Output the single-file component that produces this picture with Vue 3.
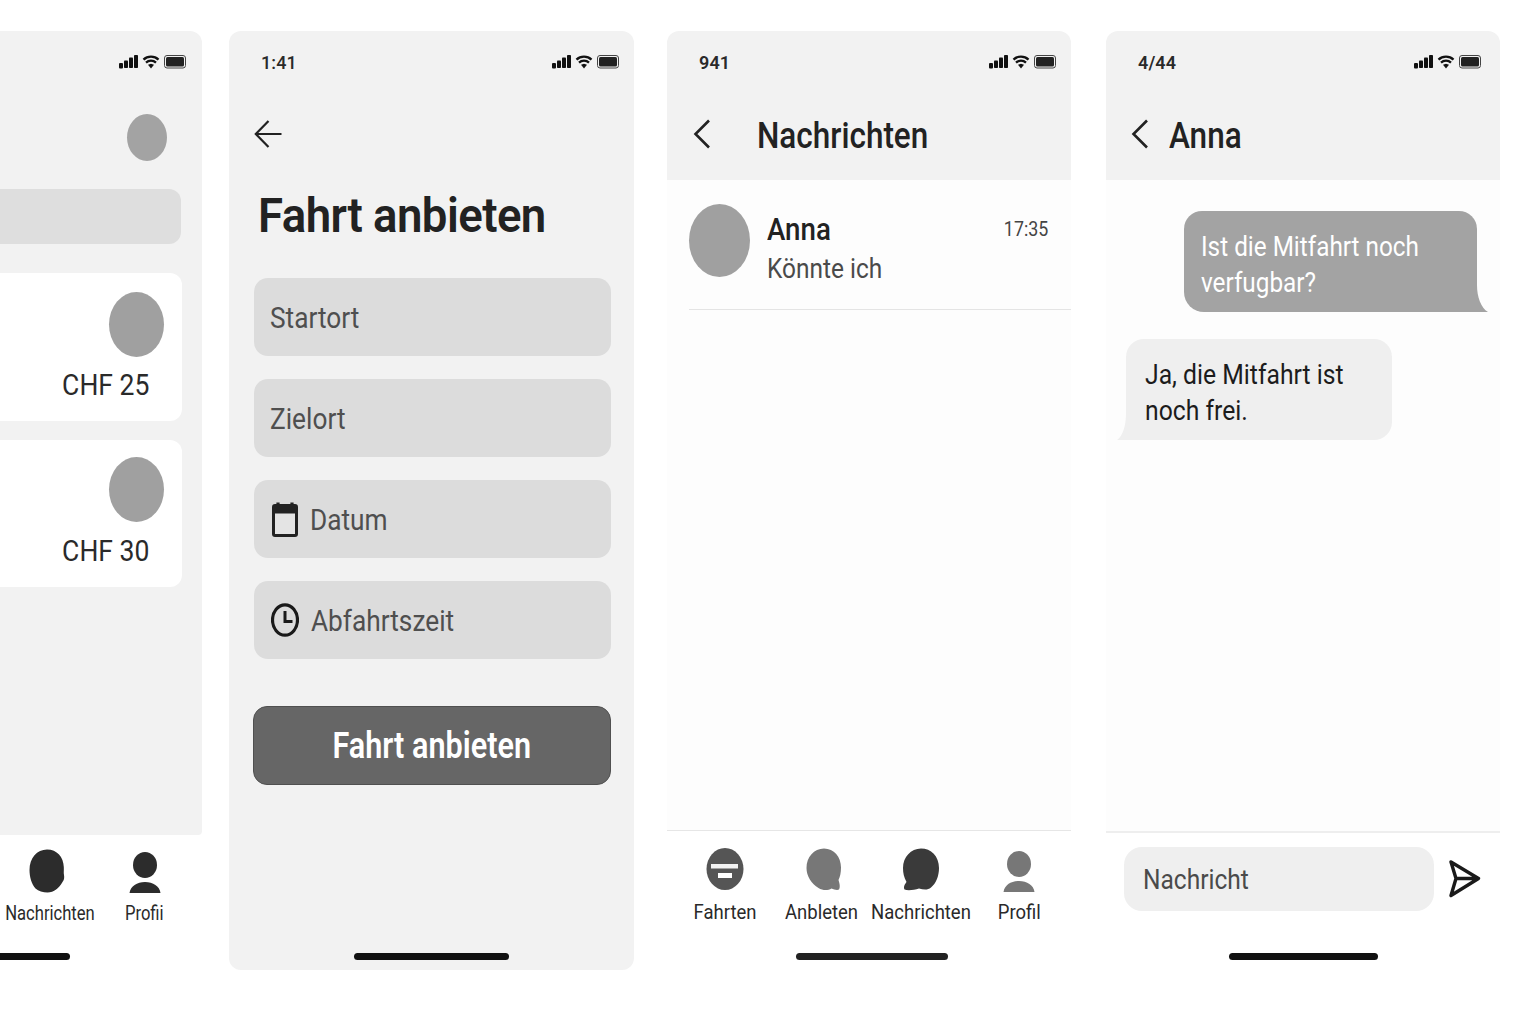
<template>
  <div class="page">
    <svg class="defs" aria-hidden="true">
      <symbol id="status" viewBox="0 0 67 14">
        <rect x="0" y="8" width="4" height="5.500" rx="1" fill="#111" />
        <rect x="5" y="5.500" width="4" height="7.500" rx="0.800" fill="#111" />
        <rect x="10" y="2.500" width="4" height="10.500" rx="0.800" fill="#111" />
        <rect x="15" y="0" width="4" height="13" rx="0.800" fill="#111" />
        <path d="M24.500 4.600C28.600 0.600 35.400 0.600 39.500 4.600" fill="none" stroke="#111" stroke-width="2.300" />
        <path d="M27 7.600C29.800 5 34.200 5 37 7.600" fill="none" stroke="#111" stroke-width="2.300" />
        <path d="M29 9.800L32 8.800L35 9.800L32 13.500Z" fill="#111" />
        <rect x="45.500" y="0.500" width="21" height="12.500" rx="2.500" fill="#f2f2f2" stroke="#444" />
        <rect x="47" y="2" width="18" height="9.500" rx="1.500" fill="#222" />
      </symbol>
      <symbol id="blob-plain" viewBox="0 0 38 44">
        <path d="M18 0.500C28 0.500 34.500 8 34.800 18C35 21 34.500 24 35 26C35.500 29 35 31 33.500 33C30 39 25 43.500 18.500 43.500C14 43.500 9.500 42 6.500 39.500C2.500 35 0.500 28 0.500 21C0.500 9 8 0.500 18 0.500Z" />
      </symbol>
      <symbol id="blob-right" viewBox="0 0 38 44">
        <path d="M20 0.500C30 0.500 37 9 37 19.500C37 25 36 29 34.500 32C35.500 35 36.500 39 35 41.500C33 42.500 30 41.500 27.500 40.500C24 42.500 19 42.800 14.500 40C7.500 36 2.500 28 2.500 20C2.500 9 10 0.500 20 0.500Z" />
      </symbol>
      <symbol id="blob-left" viewBox="0 0 38 44">
        <path d="M19 0.500C29 0.500 37 8 37 20C37 28 34 35.500 29 39.500C25.500 42.500 21 41.500 17 40.500C12 42 6 43 2.500 41.500C1 39 3 36 4.500 34C2 29.500 1 25 1 20C1 9 9 0.500 19 0.500Z" />
      </symbol>
      <symbol id="person" viewBox="0 0 34 44">
        <ellipse cx="17" cy="16" rx="12" ry="13" />
        <path d="M1.500 44C2.500 37 9 33 17 33C25 33 31.500 37 32.500 44Z" />
      </symbol>
      <symbol id="chevron" viewBox="0 0 18 30">
        <path d="M16 1.500L2.500 15L16 28.500" fill="none" stroke="#222" stroke-width="2.600" />
      </symbol>
    </svg>

    <section class="phone first">
      <div class="first-screen">
        <div class="status status-end"><svg class="status-icons"><use href="#status" /></svg></div>
        <div class="top-avatar"></div>
        <div class="search"></div>
        <div class="ride ride-a">
          <div class="ride-avatar"></div>
          <div class="price">CHF 25</div>
        </div>
        <div class="ride ride-b">
          <div class="ride-avatar"></div>
          <div class="price">CHF 30</div>
        </div>
      </div>
      <nav class="nav-first">
        <div class="tab">
          <svg class="tab-icon tab-icon-shift"><use href="#blob-plain" fill="#2c2c2c" /></svg>
          <span class="tab-label">Nachrichten</span>
        </div>
        <div class="tab">
          <svg class="tab-icon"><use href="#person" fill="#2c2c2c" /></svg>
          <span class="tab-label">Profii</span>
        </div>
      </nav>
      <div class="home home-first"></div>
    </section>

    <section class="phone offer">
      <div class="status">
        <span class="time">1:41</span>
        <svg class="status-icons"><use href="#status" /></svg>
      </div>
      <svg class="arrow" viewBox="0 0 28 30">
        <path d="M14.500 2L1.800 15L14.500 28M2 15H27.500" fill="none" stroke="#222" stroke-width="2.200" />
      </svg>
      <h1 class="offer-title">Fahrt anbieten</h1>
      <div class="fields">
        <div class="field"><span>Startort</span></div>
        <div class="field"><span>Zielort</span></div>
        <div class="field">
          <svg class="field-icon calendar" viewBox="0 0 26 35">
            <path d="M6 0.500V5M20 0.500V5" stroke="#222" stroke-width="3.200" />
            <rect x="1.500" y="3.500" width="23" height="30" rx="1.500" fill="#e4e4e4" stroke="#222" stroke-width="3" />
            <rect x="1.500" y="3.500" width="23" height="8" fill="#222" />
          </svg>
          <span>Datum</span>
        </div>
        <div class="field">
          <svg class="field-icon clock" viewBox="0 0 28 34">
            <ellipse cx="14" cy="17" rx="12.500" ry="15.200" fill="none" stroke="#1a1a1a" stroke-width="3.200" />
            <path d="M14 8V18.500H21.500" fill="none" stroke="#1a1a1a" stroke-width="3" />
          </svg>
          <span>Abfahrtszeit</span>
        </div>
      </div>
      <button class="submit"><span>Fahrt anbieten</span></button>
      <div class="home home-offer"></div>
    </section>

    <section class="phone messages">
      <header class="head">
        <div class="status">
          <span class="time time-wide">941</span>
          <svg class="status-icons"><use href="#status" /></svg>
        </div>
        <div class="head-row head-row-list">
          <svg class="chevron"><use href="#chevron" /></svg>
          <h2 class="head-title">Nachrichten</h2>
        </div>
      </header>
      <div class="list">
        <div class="conv">
          <div class="conv-avatar"></div>
          <div class="conv-body">
            <div class="conv-name">Anna</div>
            <div class="conv-text">Könnte ich</div>
          </div>
          <div class="conv-time">17:35</div>
        </div>
      </div>
      <nav class="nav-full">
        <div class="tab">
          <svg class="tab-icon" viewBox="0 0 38 44">
            <ellipse cx="19" cy="21" rx="18.500" ry="21" fill="#555" />
            <rect x="5" y="16" width="27" height="4.500" fill="#f2f2f2" />
            <rect x="12" y="25" width="14" height="5" fill="#fff" />
          </svg>
          <span class="tab-label">Fahrten</span>
        </div>
        <div class="tab">
          <svg class="tab-icon"><use href="#blob-right" fill="#777" /></svg>
          <span class="tab-label tab-label-left">Anbleten</span>
        </div>
        <div class="tab">
          <svg class="tab-icon"><use href="#blob-left" fill="#3a3a3a" /></svg>
          <span class="tab-label">Nachrichten</span>
        </div>
        <div class="tab">
          <svg class="tab-icon"><use href="#person" fill="#777" /></svg>
          <span class="tab-label">Profil</span>
        </div>
      </nav>
      <div class="home home-list"></div>
    </section>

    <section class="phone chat">
      <header class="head">
        <div class="status status-chat">
          <span class="time time-wide">4/44</span>
          <svg class="status-icons"><use href="#status" /></svg>
        </div>
        <div class="head-row head-row-chat">
          <svg class="chevron"><use href="#chevron" /></svg>
          <h2 class="head-title">Anna</h2>
        </div>
      </header>
      <div class="thread">
        <div class="bubble out">
          <span>Ist die Mitfahrt noch<br />verfugbar?</span>
          <svg class="tail tail-out" viewBox="0 0 24 27"><path d="M0 0H13C13 12 17 23 24 27H0Z" /></svg>
        </div>
        <div class="bubble in">
          <span>Ja, die Mitfahrt ist<br />noch frei.</span>
          <svg class="tail tail-in" viewBox="0 0 20 27"><path d="M20 0H9C9 12 6 23 0 27H20Z" /></svg>
        </div>
      </div>
      <div class="composer">
        <div class="composer-input"><span>Nachricht</span></div>
        <svg class="send" viewBox="0 0 32 38">
          <path d="M2 2L29.500 18.500L2 35.500L7 18.500Z M7 18.500H29.500" fill="none" stroke="#1a1a1a" stroke-width="3.400" stroke-linejoin="round" />
        </svg>
      </div>
      <div class="home home-chat"></div>
    </section>
  </div>
</template>

<script setup>
</script>

<style>
html,
body {
  background: #fff;
  overflow: hidden;
}
</style>

<style scoped>
.page {
  display: flex;
  width: 1536px;
  height: 1024px;
  padding-top: 31px;
  box-sizing: border-box;
  overflow: hidden;
  font-family: Roboto, "Liberation Sans", sans-serif;
  color: #222;
}
.defs {
  position: absolute;
  width: 0;
  height: 0;
}
.phone {
  display: flex;
  flex-direction: column;
  flex: none;
  height: 939px;
  box-sizing: border-box;
}
.first {
  width: 404px;
  margin-left: -202px;
}
.offer {
  width: 405px;
  margin-left: 27px;
  background: #f2f2f2;
  border-radius: 12px;
}
.messages {
  width: 404px;
  margin-left: 33px;
}
.chat {
  width: 394px;
  margin-left: 35px;
}
.status {
  display: flex;
  align-items: center;
  justify-content: space-between;
  height: 62px;
  padding: 0 15px 0 32px;
  flex: none;
  box-sizing: border-box;
}
.status-chat {
  padding-right: 19px;
}
.status-end {
  justify-content: flex-end;
  padding-right: 16px;
}
.status-icons {
  width: 67px;
  height: 14px;
}
.time {
  font-size: 18px;
  font-weight: 500;
  letter-spacing: 0.1px;
  color: #2a2a2a;
}
.time-wide {
  font-weight: 600;
}
.first-screen {
  display: flex;
  flex-direction: column;
  height: 804px;
  background: #f2f2f2;
  border-radius: 12px 12px 4px 4px;
}
.top-avatar {
  align-self: flex-end;
  width: 40px;
  height: 47px;
  margin: 21px 35px 0 0;
  border-radius: 50%;
  background: #a3a3a3;
}
.search {
  height: 55px;
  margin: 28px 21px 0 0;
  background: #dedede;
  border-radius: 12px;
}
.ride {
  display: flex;
  flex-direction: column;
  align-items: flex-end;
  margin-right: 20px;
  background: #fff;
  border-radius: 12px;
  box-sizing: border-box;
}
.ride-a {
  height: 148px;
  margin-top: 29px;
  padding: 19px 18px 0 0;
}
.ride-b {
  height: 147px;
  margin-top: 19px;
  padding: 17px 18px 0 0;
}
.ride-avatar {
  width: 55px;
  height: 65px;
  border-radius: 50%;
  background: #a0a0a0;
}
.price {
  margin: 12px 15px 0 0;
  font-size: 29px;
  line-height: 34px;
  color: #2a2a2a;
  transform: scaleX(0.915);
  transform-origin: right center;
}
.ride-a .price {
  margin-top: 11px;
}
.tab {
  display: flex;
  flex-direction: column;
  align-items: center;
}
.tab-icon {
  display: block;
  width: 38px;
  height: 44px;
}
.tab-icon-shift {
  margin-left: -3px;
}
.tab-label {
  margin-top: 8px;
  font-size: 20px;
  line-height: 24px;
  white-space: nowrap;
  color: #2a2a2a;
}
.nav-first .tab-label {
  transform: scaleX(0.83);
}
.nav-full .tab-label {
  transform: scaleX(0.925);
}
.nav-full .tab-label-left {
  margin-right: 3px;
}
.nav-first {
  display: grid;
  grid-template-columns: 95px 95px;
  justify-content: end;
  margin: 14px 10px 0 0;
}
.home {
  height: 7px;
  border-radius: 4px;
  background: #111;
  flex: none;
}
.home-first {
  width: 152px;
  align-self: flex-end;
  margin: 28px 132px 0 0;
}
.arrow {
  width: 28px;
  height: 30px;
  margin: 26px 0 0 25px;
  flex: none;
}
.offer-title {
  margin: 37px 0 0 29px;
  font-size: 49px;
  line-height: 60px;
  font-weight: 600;
  letter-spacing: -0.600px;
  color: #222;
  transform: scaleX(0.93);
  transform-origin: left center;
}
.fields {
  display: flex;
  flex-direction: column;
  gap: 23px;
  margin: 32px 23px 0 25px;
}
.field {
  display: flex;
  align-items: center;
  gap: 12px;
  height: 78px;
  padding-left: 16px;
  background: #dcdcdc;
  border-radius: 14px;
  font-size: 30px;
  color: #4f4f4f;
  box-sizing: border-box;
}
.field span {
  transform: scaleX(0.875);
  transform-origin: left center;
}
.field-icon {
  flex: none;
}
.calendar {
  width: 26px;
  height: 35px;
  margin-left: 2px;
}
.clock {
  width: 28px;
  height: 34px;
  margin-left: 1px;
}
.submit {
  height: 79px;
  margin: 47px 23px 0 24px;
  background: #666;
  border: 1px solid #505050;
  border-radius: 14px;
  font-family: inherit;
  font-size: 36px;
  font-weight: 600;
  color: #fff;
  flex: none;
}
.submit span {
  display: inline-block;
  transform: scaleX(0.85);
}
.home-offer {
  width: 155px;
  margin: 168px 0 0 125px;
}
.head {
  height: 149px;
  background: #f2f2f2;
  border-radius: 12px 12px 0 0;
  flex: none;
}
.head-row {
  display: flex;
  align-items: center;
  height: 50px;
  margin-top: 18px;
}
.head-row-list {
  padding-left: 26px;
  gap: 46px;
}
.head-row-chat {
  padding-left: 25px;
  gap: 20px;
}
.chevron {
  width: 18px;
  height: 30px;
  margin-top: -4px;
  flex: none;
}
.head-title {
  margin: 0;
  font-size: 36px;
  font-weight: 500;
  color: #222;
  transform: scaleX(0.875);
  transform-origin: left center;
}
.list {
  flex: none;
  height: 651px;
  padding-left: 22px;
  background: #fdfdfd;
  border-bottom: 1px solid #e6e6e6;
  box-sizing: border-box;
}
.conv {
  display: flex;
  align-items: flex-start;
  height: 130px;
  padding: 24px 23px 0 0;
  border-bottom: 1px solid #e4e4e4;
  box-sizing: border-box;
}
.conv-avatar {
  width: 61px;
  height: 73px;
  border-radius: 50%;
  background: #a0a0a0;
  flex: none;
}
.conv-body {
  flex: 1;
  margin-left: 17px;
}
.conv-name {
  margin-top: 6px;
  font-size: 32px;
  line-height: 38px;
  font-weight: 500;
  color: #222;
  transform: scaleX(0.865);
  transform-origin: left center;
}
.conv-text {
  margin-top: 1px;
  font-size: 27px;
  line-height: 40px;
  color: #4a4a4a;
  transform: scaleX(0.905);
  transform-origin: left center;
}
.conv-time {
  margin-top: 12px;
  font-size: 21px;
  line-height: 26px;
  color: #444;
  transform: scaleX(0.85);
  transform-origin: right center;
}
.nav-full {
  display: grid;
  grid-template-columns: repeat(4, 98px);
  margin-top: 17px;
  padding-left: 9px;
}
.home-list {
  width: 152px;
  margin: 29px 0 0 129px;
  background: #222;
}
.thread {
  display: flex;
  flex-direction: column;
  flex: none;
  height: 653px;
  padding: 31px 0 0 20px;
  background: #fdfdfd;
  border-bottom: 2px solid #eee;
  box-sizing: border-box;
}
.bubble {
  position: relative;
  box-sizing: border-box;
  height: 101px;
  font-size: 27px;
  line-height: 36px;
  padding: 18px 0 0 17px;
  white-space: nowrap;
}
.bubble span {
  display: inline-block;
  transform: scaleX(0.9);
  transform-origin: left center;
}
.in span {
  transform: scaleX(0.915);
}
.out {
  align-self: flex-start;
  width: 293px;
  margin-left: 58px;
  background: #a3a3a3;
  border-radius: 18px 18px 0 20px;
  color: #fff;
}
.in {
  align-self: flex-start;
  width: 266px;
  margin-top: 27px;
  padding-left: 19px;
  background: #efefef;
  border-radius: 18px 18px 18px 0;
  color: #1c1c1c;
}
.tail {
  position: absolute;
  bottom: 0;
  height: 27px;
}
.tail-out {
  right: -11px;
  width: 24px;
  fill: #a3a3a3;
}
.tail-in {
  left: -9px;
  width: 20px;
  fill: #efefef;
}
.composer {
  display: flex;
  align-items: center;
  height: 64px;
  margin-top: 14px;
  padding-left: 18px;
  flex: none;
}
.composer-input {
  display: flex;
  align-items: center;
  width: 310px;
  height: 64px;
  padding-left: 19px;
  box-sizing: border-box;
  background: #efefef;
  border-radius: 18px;
  font-size: 28px;
  color: #4a4a4a;
}
.composer-input span {
  transform: scaleX(0.876);
  transform-origin: left center;
}
.send {
  width: 32px;
  height: 38px;
  margin-left: 15px;
}
.home-chat {
  width: 149px;
  margin: 42px 0 0 123px;
}
</style>
